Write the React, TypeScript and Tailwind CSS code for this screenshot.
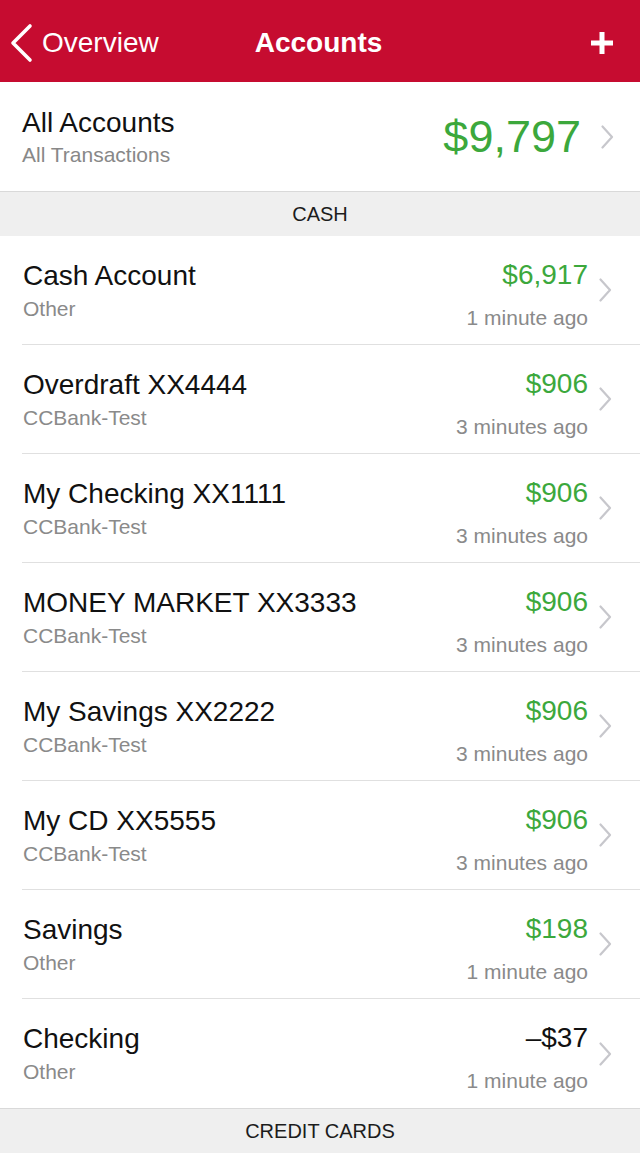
const accounts = [
  { name: "Cash Account", sub: "Other", amount: "$6,917", time: "1 minute ago", positive: true },
  { name: "Overdraft XX4444", sub: "CCBank-Test", amount: "$906", time: "3 minutes ago", positive: true },
  { name: "My Checking XX1111", sub: "CCBank-Test", amount: "$906", time: "3 minutes ago", positive: true },
  { name: "MONEY MARKET XX3333", sub: "CCBank-Test", amount: "$906", time: "3 minutes ago", positive: true },
  { name: "My Savings XX2222", sub: "CCBank-Test", amount: "$906", time: "3 minutes ago", positive: true },
  { name: "My CD XX5555", sub: "CCBank-Test", amount: "$906", time: "3 minutes ago", positive: true },
  { name: "Savings", sub: "Other", amount: "$198", time: "1 minute ago", positive: true },
  { name: "Checking", sub: "Other", amount: "\u2013$37", time: "1 minute ago", positive: false },
];

/* ---------------- ICONS ---------------- */
function Chevron() {
  return (
    <svg width="13" height="24" viewBox="0 0 13 24" fill="none">
      <polyline points="1.5,1.5 11,12 1.5,22.5" stroke="#c7c7cc" strokeWidth="2.2" strokeLinecap="round" strokeLinejoin="round" />
    </svg>
  );
}

function SectionHeader({ title }: { title: string }) {
  return (
    <div className="flex h-[45px] items-center justify-center border-t border-[#d9d9d9] bg-[#efefef] text-[20px] leading-[24px] text-[#1c1c1c]">
      {title}
    </div>
  );
}

export default function App() {
  return (
    <main className="min-h-screen bg-white font-['Liberation_Sans',Arial,sans-serif]">
      {/* HEADER */}
      <header className="grid h-[82px] grid-cols-[1fr_auto_1fr] items-center bg-[#c60c30] pt-[4px] text-white">
        <div className="flex items-center">
          <svg className="ml-[9px]" width="26" height="40" viewBox="0 0 26 40" fill="none">
            <polyline points="21,3 4,20 21,37" stroke="white" strokeWidth="3.6" strokeLinecap="round" strokeLinejoin="round" />
          </svg>
          <span className="ml-[7px] text-[28px] leading-[32px]">Overview</span>
        </div>
        <div className="pr-[3px] text-[28px] font-bold leading-[32px]">Accounts</div>
        <div className="flex justify-end pr-[27px]">
          <svg width="22" height="22" viewBox="0 0 22 22">
            <rect x="8.5" y="0" width="5" height="22" fill="white" />
            <rect x="0" y="8.5" width="22" height="5" fill="white" />
          </svg>
        </div>
      </header>

      {/* ALL ACCOUNTS */}
      <div className="flex h-[109px] items-center pl-[22px] pr-[26px]">
        <div className="flex-1 self-start pt-[25px]">
          <div className="text-[28px] leading-[32px] text-[#111]">All Accounts</div>
          <div className="mt-[4px] text-[21px] leading-[24px] text-[#888]">All Transactions</div>
        </div>
        <div className="text-[45px] leading-[52px] text-[#3ca83c]">$9,797</div>
        <div className="ml-[20px]">
          <Chevron />
        </div>
      </div>

      <SectionHeader title="CASH" />

      {accounts.map((a, i) => (
        <div key={a.name} className="pl-[22px]">
          <div
            className={`flex h-[109px] pl-[1px] pr-[28px] ${
              i < accounts.length - 1 ? "border-b border-[#e0e0e0]" : ""
            }`}
          >
            <div className="flex-1 pt-[24px]">
              <div className="text-[28px] leading-[32px] text-[#111]">{a.name}</div>
              <div className="mt-[5px] text-[21px] leading-[24px] text-[#8a8a8a]">{a.sub}</div>
            </div>
            <div className="pt-[23px] text-right">
              <div className={`text-[28px] leading-[32px] ${a.positive ? "text-[#3ca83c]" : "text-[#111]"}`}>
                {a.amount}
              </div>
              <div className="mt-[15px] text-[21px] leading-[24px] text-[#8a8a8a]">{a.time}</div>
            </div>
            <div className="ml-[11px] self-center">
              <Chevron />
            </div>
          </div>
        </div>
      ))}

      <SectionHeader title="CREDIT CARDS" />
    </main>
  );
}
